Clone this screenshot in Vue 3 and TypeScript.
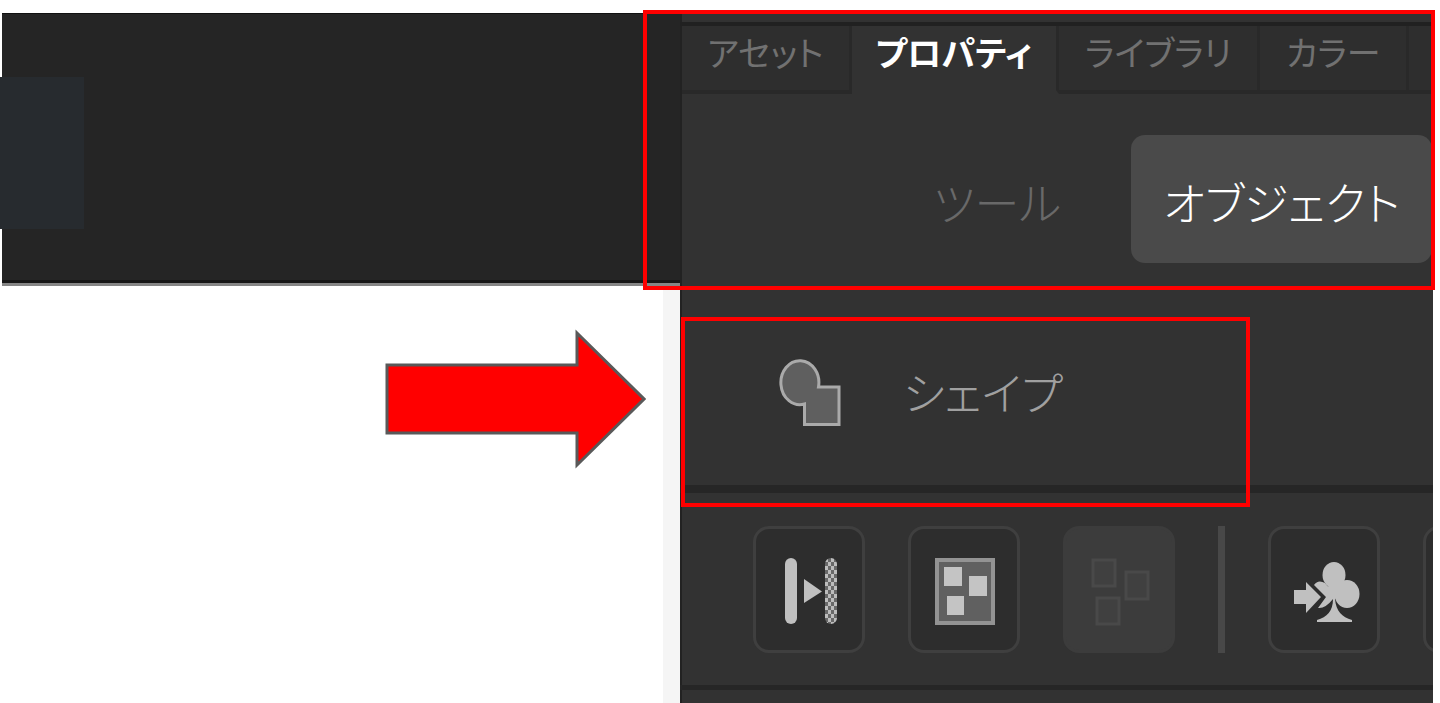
<script setup lang="ts">
import { ref } from 'vue'

const tabs: string[] = ['アセット', 'プロパティ', 'ライブラリ', 'カラー']
const modes: string[] = ['ツール', 'オブジェクト']
const activeTab = ref<string>('プロパティ')
const activeMode = ref<string>('オブジェクト')
</script>

<template>
  <main class="page">
    <section class="stage">
      <div class="pasteboard"><div class="selection"></div></div>
      <div class="canvas">
        <svg class="arrow" viewBox="0 0 262 140" role="img" aria-label="矢印">
          <path d="M3 36H193V4L260 70L193 136V104H3Z" fill="#f00" stroke="#595959" stroke-width="3" />
        </svg>
        <div class="scroll-edge"></div>
      </div>
    </section>

    <aside class="panel">
      <div class="strip"></div>
      <nav class="tabs" role="tablist">
        <button
          v-for="tab in tabs"
          :key="tab"
          type="button"
          role="tab"
          class="tab"
          :class="{ active: tab === activeTab }"
          :aria-selected="tab === activeTab"
          @click="activeTab = tab"
        >{{ tab }}</button>
        <div class="tab-rest"></div>
      </nav>

      <div class="modes">
        <button
          v-for="mode in modes"
          :key="mode"
          type="button"
          class="mode"
          :class="{ active: mode === activeMode }"
          :aria-pressed="mode === activeMode"
          @click="activeMode = mode"
        >{{ mode }}</button>
      </div>

      <div class="shape">
        <svg class="shape-icon" viewBox="0 0 64 70" aria-hidden="true">
          <path
            d="M25.500 47A19 22 0 1 1 39.500 30H60V67.500H25.500Z"
            fill="#5f5f5f" stroke="#aaa" stroke-width="3"
          />
        </svg>
        <span>シェイプ</span>
        <div class="frame frame-shape"></div>
      </div>

      <div class="tools">
        <button type="button" class="tool" aria-label="変換">
          <svg viewBox="0 0 112 128">
            <defs>
              <pattern id="dots" width="6" height="8" patternUnits="userSpaceOnUse">
                <rect width="6" height="8" fill="#686868" />
                <path d="M0 0h3v4h-3zM3 4h3v4h-3z" fill="#bcbcbc" />
              </pattern>
            </defs>
            <rect x="32" y="32" width="12" height="66" rx="6" fill="#c0c0c0" />
            <path d="M51 53L69 65.500L51 77Z" fill="#c0c0c0" />
            <rect x="72" y="32" width="12" height="66" rx="6" fill="url(#dots)" />
          </svg>
        </button>
        <button type="button" class="tool" aria-label="グループ化">
          <svg viewBox="0 0 112 128">
            <rect x="29" y="34" width="56" height="63" fill="#606060" stroke="#939393" stroke-width="4" />
            <path d="M36 41h18v19h-18zM61 50h18v20h-18zM39 70h17v19h-17z" fill="#c4c4c4" />
          </svg>
        </button>
        <button type="button" class="tool disabled" aria-label="グループ解除" disabled>
          <svg viewBox="0 0 112 128">
            <path
              d="M30 34h22v26h-22zM63 46h22v27h-22zM34 72h22v26h-22z"
              fill="#404040" stroke="#494949" stroke-width="3"
            />
          </svg>
        </button>
        <div class="divider"></div>
        <button type="button" class="tool" aria-label="シンボルに変換">
          <svg viewBox="0 0 112 128">
            <g fill="#c0c0c0">
              <path d="M26 64H38V56L53 71L38 87V78H26Z" />
              <ellipse cx="66" cy="49" rx="11.500" ry="13" />
              <ellipse cx="79" cy="68" rx="12.500" ry="14" />
              <path d="M61 55C62 60 61 63 57 57Q50 53 46 59L58 71L50 82Q57 83 65 73C65 85 59 91 49 94V96H84V94C74 91 68 85 67 73L74 66C71 62 70 59 71 55Z" />
            </g>
          </svg>
        </button>
        <button type="button" class="tool" aria-label="その他"></button>
      </div>

      <div class="frame frame-properties"></div>
    </aside>
  </main>
</template>

<style>
body {
  margin: 0;
  background: #fff;
}
</style>

<style scoped>
.page {
  box-sizing: border-box;
  display: grid;
  grid-template-columns: 678fr 753fr;
  min-height: 100vh;
  padding: 13px 7px 0 2px;
  overflow: hidden;
  font-family: "Noto Sans CJK JP", sans-serif;
  font-feature-settings: "palt";
}
button {
  margin: 0;
  font: inherit;
  font-feature-settings: inherit;
  white-space: nowrap;
  cursor: pointer;
}
.stage {
  display: flex;
  flex-direction: column;
}
.pasteboard {
  box-sizing: border-box;
  height: 273px;
  padding-top: 63px;
  background: #252525;
  border-top: 1px solid #111;
  border-bottom: 3px solid #858585;
  box-shadow: inset 0 -3px #161616;
}
.selection {
  width: 84px;
  height: 152px;
  margin-left: -2px;
  background: #272b2f;
}
.canvas {
  flex: 1;
  display: flex;
  justify-content: flex-end;
  align-items: flex-start;
  gap: 17px;
}
.arrow {
  width: 262px;
  height: 140px;
  margin-top: 43px;
}
.scroll-edge {
  align-self: stretch;
  width: 17px;
  background: #f5f5f5;
}
.panel {
  position: relative;
  min-width: 0;
  background: #323232;
  box-shadow: inset 2px 0 #222;
}
.strip {
  height: 9px;
  border-bottom: 4px solid #212121;
}
.tabs {
  display: grid;
  grid-template-columns: 170fr 208fr 202fr 149fr 24fr;
  height: 68px;
  padding-left: 2px;
}
.tab,
.tab-rest {
  box-sizing: border-box;
  min-width: 0;
  border: 0 solid #292929;
  border-right-width: 3px;
  border-bottom-width: 4px;
  background: #2e2e2e;
}
.tab {
  padding: 0 0 12px;
  color: #717171;
  font-size: 34px;
  line-height: 52px;
}
.tab.active {
  background: #323232;
  border-bottom-color: #323232;
  color: #fff;
  font-weight: 700;
}
.tab-rest {
  border-right: 0;
}
.modes {
  display: flex;
  justify-content: flex-end;
  gap: 38px;
  padding: 41px 1px 27px 0;
}
.mode {
  height: 128px;
  padding: 4px 32px 0;
  border: 0;
  border-radius: 14px;
  background: none;
  color: #696969;
  font-size: 45px;
  font-weight: 300;
}
.mode.active {
  background: #4a4a4a;
  color: #fff;
}
.shape {
  position: relative;
  box-sizing: border-box;
  display: flex;
  align-items: center;
  gap: 60px;
  height: 203px;
  padding: 8px 0 0 99px;
  border-bottom: 8px solid #262626;
  color: #a0a0a0;
  font-size: 45px;
  font-weight: 300;
}
.shape-icon {
  width: 64px;
  height: 70px;
}
.tools {
  box-sizing: border-box;
  display: flex;
  gap: 43px;
  height: 197px;
  padding: 33px 0 34px 73px;
  border-bottom: 5px solid #262626;
  overflow: hidden;
}
.tool {
  box-sizing: border-box;
  flex: none;
  width: 112px;
  height: 127px;
  padding: 0;
  border: 3px solid #3f3f3f;
  border-radius: 16px;
  background: #2d2d2d;
}
.tool svg {
  display: block;
  width: 112px;
  height: 128px;
  margin: -3px;
}
.tool.disabled {
  border-color: #3c3c3c;
  background: #3c3c3c;
}
.divider {
  flex: none;
  width: 7px;
  height: 127px;
  background: #484848;
}
.frame {
  position: absolute;
  box-sizing: border-box;
  border: 4px solid #f00;
  pointer-events: none;
}
.frame-properties {
  top: -3px;
  right: -2px;
  left: -37px;
  height: 280px;
}
.frame-shape {
  top: 27px;
  left: 1px;
  width: 569px;
  height: 190px;
}
</style>
